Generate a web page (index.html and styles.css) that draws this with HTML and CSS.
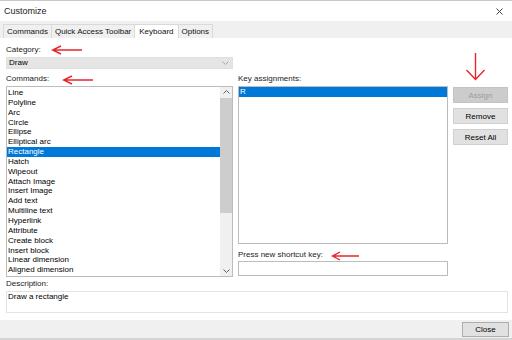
FILE: index.html
```html
<!DOCTYPE html>
<html lang="en">
<head>
    <meta charset="UTF-8">
    <title>Customize</title>
    <link rel="stylesheet" href="styles.css">
</head>
<body>
    <div class="dialog">
        <div class="titlebar">
            <span class="title">Customize</span>
            <svg class="close-x" width="7" height="7" viewBox="0 0 7 7">
                <path d="M0.5 0.5 L6.5 6.5 M6.5 0.5 L0.5 6.5" stroke="#444" stroke-width="1" fill="none"/>
            </svg>
        </div>
        <div class="tabs">
            <div class="tab">Commands</div>
            <div class="tab">Quick Access Toolbar</div>
            <div class="tab active">Keyboard</div>
            <div class="tab">Options</div>
        </div>
        <div class="panel">
            <div class="label">Category:</div>
            <div class="select">
                <span>Draw</span>
                <svg width="7" height="4" viewBox="0 0 7 4">
                    <polyline points="0.5,0.5 3.5,3.5 6.5,0.5" stroke="#aaa" stroke-width="1" fill="none"/>
                </svg>
            </div>
            <div class="columns">
                <div class="col col-left">
                    <div class="label">Commands:</div>
                    <div class="listbox commands">
                        <ul class="items">
                            <li>Line</li>
                            <li>Polyline</li>
                            <li>Arc</li>
                            <li>Circle</li>
                            <li>Ellipse</li>
                            <li>Elliptical arc</li>
                            <li class="selected">Rectangle</li>
                            <li>Hatch</li>
                            <li>Wipeout</li>
                            <li>Attach Image</li>
                            <li>Insert Image</li>
                            <li>Add text</li>
                            <li>Multiline text</li>
                            <li>Hyperlink</li>
                            <li>Attribute</li>
                            <li>Create block</li>
                            <li>Insert block</li>
                            <li>Linear dimension</li>
                            <li>Aligned dimension</li>
                        </ul>
                        <div class="scrollbar">
                            <div class="scroll-btn">
                                <svg width="7" height="4" viewBox="0 0 7 4">
                                    <polyline points="0.5,3.5 3.5,0.5 6.5,3.5" stroke="#606060" stroke-width="1" fill="none"/>
                                </svg>
                            </div>
                            <div class="thumb"></div>
                            <div class="track"></div>
                            <div class="scroll-btn">
                                <svg width="7" height="4" viewBox="0 0 7 4">
                                    <polyline points="0.5,0.5 3.5,3.5 6.5,0.5" stroke="#606060" stroke-width="1" fill="none"/>
                                </svg>
                            </div>
                        </div>
                    </div>
                </div>
                <div class="col col-mid">
                    <div class="label">Key assignments:</div>
                    <ul class="listbox keys">
                        <li class="selected">R</li>
                    </ul>
                    <div class="label shortcut-label">Press new shortcut key:</div>
                    <div class="textbox"></div>
                </div>
                <div class="col col-right">
                    <button class="btn" disabled>Assign</button>
                    <button class="btn">Remove</button>
                    <button class="btn">Reset All</button>
                </div>
            </div>
            <div class="label desc-label">Description:</div>
            <div class="description">Draw a rectangle</div>
        </div>
        <div class="footer">
            <button class="btn close">Close</button>
        </div>

        <!-- red annotation arrows -->
        <svg class="arrow arrow-category" width="32" height="10" viewBox="0 0 32 10">
            <path d="M31 5 H1.5 M10 1 L1.5 5 L10 9" stroke="#e8262a" stroke-width="1.4" fill="none"/>
        </svg>
        <svg class="arrow arrow-commands" width="32" height="10" viewBox="0 0 32 10">
            <path d="M31 5 H1.5 M10 1 L1.5 5 L10 9" stroke="#e8262a" stroke-width="1.4" fill="none"/>
        </svg>
        <svg class="arrow arrow-shortcut" width="29" height="10" viewBox="0 0 29 10">
            <path d="M28 5 H1.5 M9 1 L1.5 5 L9 9" stroke="#e8262a" stroke-width="1.4" fill="none"/>
        </svg>
        <svg class="arrow arrow-assign" width="21" height="28" viewBox="0 0 21 28">
            <path d="M10.5 0 V26.5 M1.5 17 L10.5 26.5 L19.5 17" stroke="#e8262a" stroke-width="1.4" fill="none"/>
        </svg>
    </div>
</body>
</html>
```

FILE: styles.css
```css
* {
    box-sizing: border-box;
}
body {
    margin: 0;
    font-family: "Liberation Sans", Arial, sans-serif;
    font-size: 8px;
    color: #000;
    background-color: #fff;
}
.dialog {
    position: relative;
    width: 512px;
    height: 340px;
    overflow: hidden;
    display: flex;
    flex-direction: column;
}
.titlebar {
    height: 21px;
    border-top: 1px solid #c8c8c8;
    display: flex;
    align-items: center;
    justify-content: space-between;
    padding: 0 9px 0 4px;
    background-color: #fff;
}
.title {
    font-size: 9px;
    color: #222;
}
.tabs {
    height: 17px;
    background-color: #f0f0f0;
    display: flex;
    align-items: flex-end;
    padding-left: 3px;
}
.tab {
    height: 14px;
    line-height: 13px;
    padding: 0 3px;
    border: 1px solid #d9d9d9;
    border-bottom: none;
    background-color: #f0f0f0;
    margin-right: -1px;
    color: #111;
}
.tab.active {
    background-color: #fff;
    padding: 0 4px;
}
.panel {
    height: 282px;
    background-color: #fff;
    padding: 7px 4px 0 6px;
}
.label {
    height: 10px;
    line-height: 10px;
    color: #1a1a1a;
}
.select {
    margin-top: 2px;
    width: 227px;
    height: 12px;
    background-color: #e5e5e5;
    border: 1px solid #e0e0e0;
    padding: 0 3px 0 2px;
    display: flex;
    align-items: center;
    justify-content: space-between;
    line-height: 10px;
}
.columns {
    display: flex;
    gap: 5px;
    margin-top: 5px;
}
.col-left {
    width: 227px;
}
.col-mid {
    width: 210px;
}
.col-right {
    width: 55px;
    padding-top: 13px;
    display: flex;
    flex-direction: column;
    gap: 5px;
}
.listbox {
    margin: 2px 0 0 0;
    border: 1px solid #bcbcbc;
    background-color: #fff;
}
.commands {
    height: 191px;
    display: flex;
}
.items,
.keys {
    list-style: none;
    padding: 0;
}
.items {
    flex: 1;
    margin: 0;
    padding-top: 1px;
}
.items li {
    height: 9.85px;
    line-height: 9.85px;
    padding-left: 1px;
    white-space: nowrap;
}
.keys {
    height: 158px;
}
.keys li {
    height: 10px;
    line-height: 10px;
    padding-left: 1px;
}
.selected {
    background-color: #0078d7;
    color: #fff;
}
.scrollbar {
    width: 12px;
    background-color: #f0f0f0;
    display: flex;
    flex-direction: column;
}
.scroll-btn {
    height: 10px;
    display: flex;
    align-items: center;
    justify-content: center;
}
.thumb {
    margin-top: 1px;
    height: 115px;
    background-color: #cdcdcd;
}
.track {
    flex: 1;
}
.shortcut-label {
    margin-top: 6px;
}
.textbox {
    margin-top: 1px;
    height: 15px;
    border: 1px solid #bcbcbc;
}
.btn {
    height: 16px;
    padding: 0;
    font-family: inherit;
    font-size: 8px;
    color: #000;
    background-color: #e1e1e1;
    border: 1px solid #d0d0d0;
}
.btn:disabled {
    background-color: #cccccc;
    border-color: #c4c4c4;
    color: #9c9c9c;
}
.desc-label {
    margin-top: 2px;
}
.description {
    margin-top: 2px;
    width: 502px;
    height: 22px;
    border: 1px solid #e3e3e3;
    padding: 0 1px;
    line-height: 9px;
}
.footer {
    height: 20px;
    background-color: #f0f0f0;
    border-bottom: 2px solid #d4d4d4;
    display: flex;
    justify-content: flex-end;
    padding: 2px 3px 0 0;
}
.btn.close {
    width: 47px;
    height: 15px;
    border-color: #adadad;
}
.arrow {
    position: absolute;
}
.arrow-category {
    left: 51px;
    top: 45px;
}
.arrow-commands {
    left: 62px;
    top: 75px;
}
.arrow-shortcut {
    left: 331px;
    top: 251px;
}
.arrow-assign {
    left: 465px;
    top: 53px;
}
```
